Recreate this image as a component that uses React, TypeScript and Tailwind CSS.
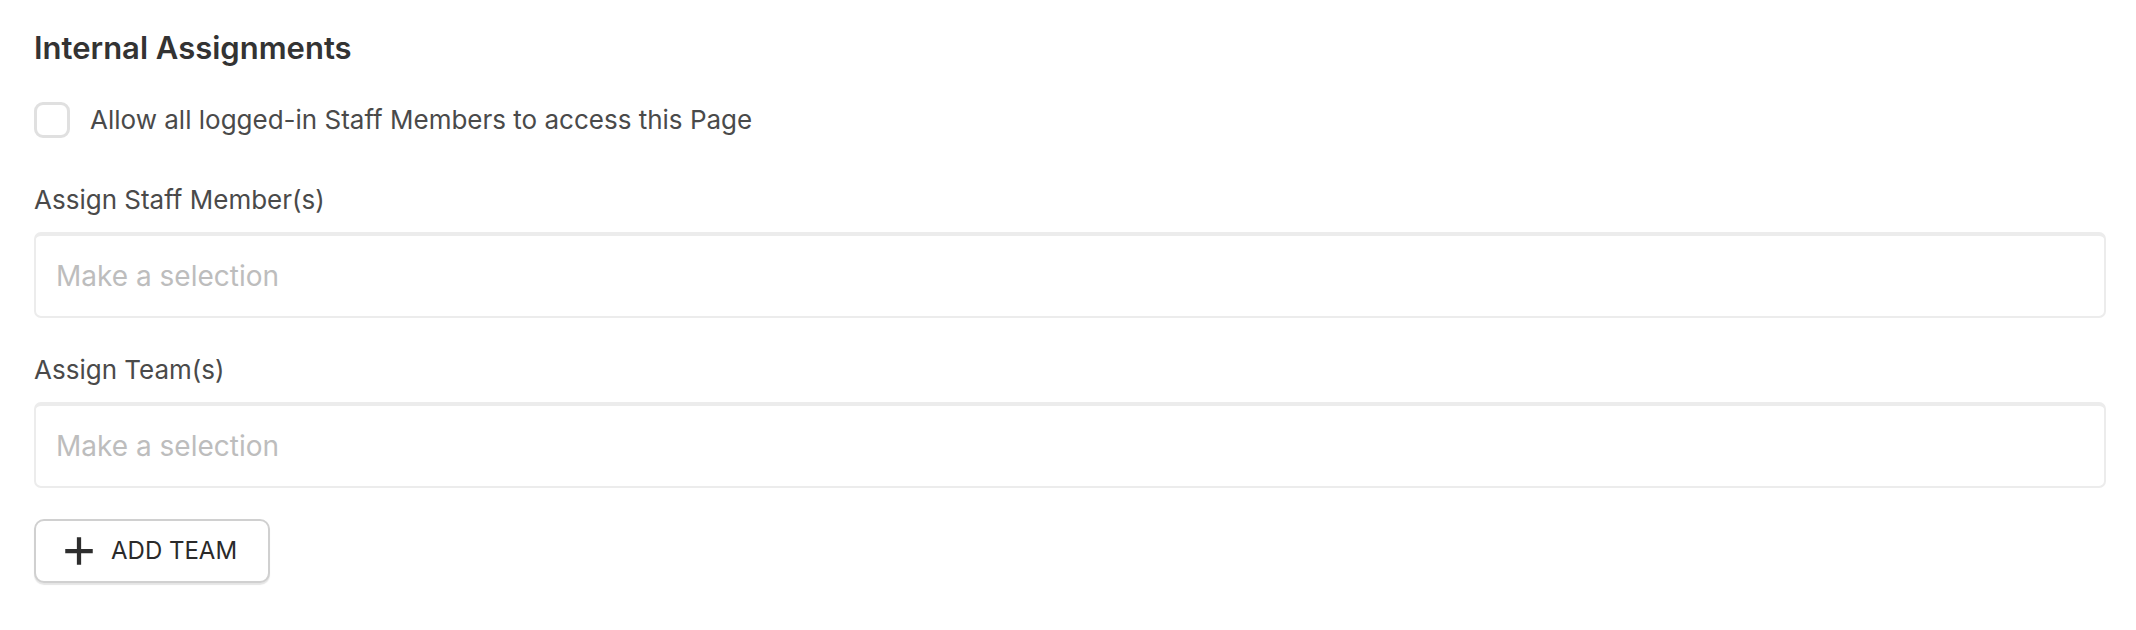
export default function App() {
  return (
    <div
      className="min-h-[630px] w-full bg-white pl-[34px] pr-[30px] pt-[30px] text-[#4a4a4a]"
      style={{ fontFamily: "Inter, 'Noto Sans', sans-serif" }}
    >
      <h2 className="text-[31px] font-semibold leading-[36px] text-[#333333]">
        Internal Assignments
      </h2>

      <label className="mt-[36px] flex items-center gap-[20px]">
        <span className="h-[36px] w-[36px] shrink-0 rounded-[9px] border-[3px] border-[#e0e0e0] bg-white" />
        <span className="text-[26px] leading-[36px]">
          Allow all logged-in Staff Members to access this Page
        </span>
      </label>

      <Field label="Assign Staff Member(s)" className="mt-[46px]" />
      <Field label="Assign Team(s)" className="mt-[36px]" />

      <button className="mt-[31px] flex h-[64px] w-[236px] items-center gap-[17px] rounded-[10px] border-2 border-[#d0d0d0] bg-white pl-[28px] text-[24px] text-[#2a2a2a] shadow-[0_2px_1px_rgba(0,0,0,0.1)]">
        <svg width="30" height="30" viewBox="0 0 24 24" fill="none" stroke="#2e2e2e" strokeWidth="3.4" strokeLinecap="butt">
          <path d="M12 1v22M1 12h22" />
        </svg>
        ADD TEAM
      </button>
    </div>
  );
}

function Field({ label, className }: { label: string; className?: string }) {
  return (
    <div className={className}>
      <div className="text-[26px] leading-[32px]">{label}</div>
      <div className="mt-[16px] flex h-[86px] items-center rounded-[7px] border-2 border-[#ececec] border-t-[4px] bg-white px-[20px] text-[28px] text-[#bdbdbd]">
        Make a selection
      </div>
    </div>
  );
}
